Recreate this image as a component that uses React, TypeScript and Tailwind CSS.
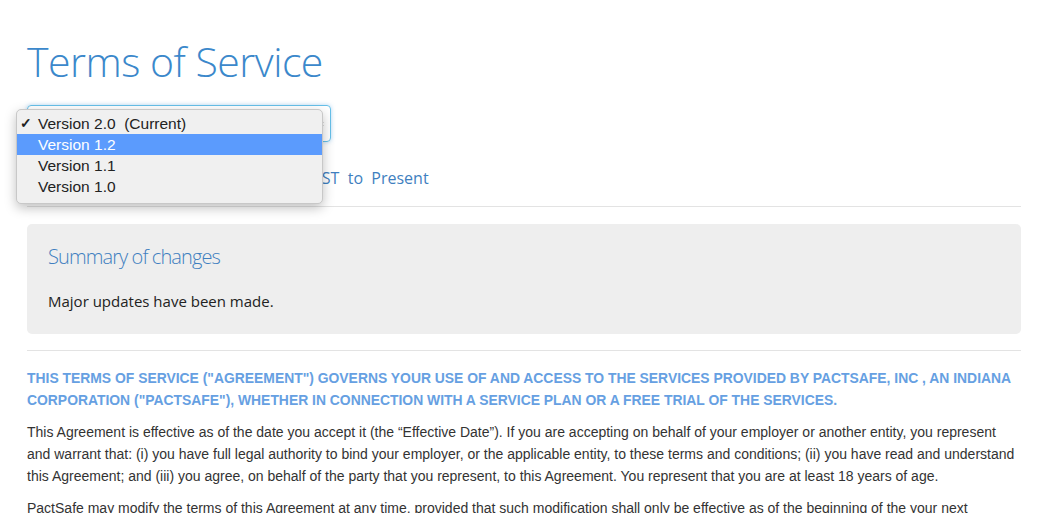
const VERSIONS = ["Version 2.0  (Current)", "Version 1.2", "Version 1.1", "Version 1.0"];

function VersionMenu() {
  return (
    <div className="absolute left-[-11px] top-[4px] w-[307px] rounded-[5px] border border-[#c8c8c8] bg-[#f0f0f0] pt-[3px] pb-[6px] shadow-[0_4px_12px_rgba(0,0,0,0.25)] font-['Liberation_Sans',sans-serif] text-[15.5px] text-[#222]">
      {VERSIONS.map((v, i) => (
        <div
          key={v}
          className={
            "flex h-[21px] items-center whitespace-pre " +
            (i === 1 ? "bg-[#5b9bfd] text-white" : "")
          }
        >
          <span className="w-[21px] pl-[3px] text-[14px] font-bold">{i === 0 ? "✓" : ""}</span>
          {v}
        </div>
      ))}
    </div>
  );
}

export default function App() {
  return (
    <div className="min-h-[513px] bg-white pl-[27px] pr-[24px] pt-[35px] font-['Open_Sans',sans-serif]">
      <h1 className="text-[41px] font-light leading-[53px] tracking-[-0.5px] text-[#3b88cb]">
        Terms of Service
      </h1>

      <div className="relative mt-[17px] w-[304px]">
        <div className="flex h-[37px] items-center justify-end rounded-[4px] border border-[#66c0e9] pr-[6px] shadow-[0_0_4px_rgba(102,175,233,0.5)]">
          <svg width="8" height="14" viewBox="0 0 8 14">
            <path d="M4 1 L7.5 5.5 H0.5 Z M4 13 L7.5 8.5 H0.5 Z" fill="#222" />
          </svg>
        </div>
        <VersionMenu />
      </div>

      <p className="mt-[25px] text-[16px] leading-[22px] text-[#3f7fc0] whitespace-pre">
        Effective  January  12, 2018  12:00 AM  PST  to  Present
      </p>

      <hr className="mt-[17px] border-t border-[#e3e3e3]" />

      <div className="mt-[17px] rounded-[5px] bg-[#eeeeee] px-[21px] pt-[18px] pb-[22px]">
        <h2 className="text-[20px] font-light leading-[30px] tracking-[-0.9px] text-[#3f7fc0]">
          Summary of changes
        </h2>
        <p className="mt-[18px] text-[15px] leading-[22px] text-[#222]">
          Major updates have been made.
        </p>
      </div>

      <hr className="mt-[16px] border-t border-[#e3e3e3]" />

      <div className="pt-[16px] font-['Liberation_Sans',sans-serif] text-[14px] leading-[22px] text-[#333]">
        <p className="text-[13.9px] font-bold text-[#66a0e2]">
          THIS TERMS OF SERVICE ("AGREEMENT") GOVERNS YOUR USE OF AND ACCESS TO THE SERVICES PROVIDED BY PACTSAFE, INC , AN INDIANA CORPORATION ("PACTSAFE"), WHETHER IN CONNECTION WITH A SERVICE PLAN OR A FREE TRIAL OF THE SERVICES.
        </p>
        <p className="mt-[10px]">
          This Agreement is effective as of the date you accept it (the “Effective Date”). If you are accepting on behalf of your employer or another entity, you represent and warrant that: (i) you have full legal authority to bind your employer, or the applicable entity, to these terms and conditions; (ii) you have read and understand this Agreement; and (iii) you agree, on behalf of the party that you represent, to this Agreement. You represent that you are at least 18 years of age.
        </p>
        <p className="mt-[10px]">
          PactSafe may modify the terms of this Agreement at any time, provided that such modification shall only be effective as of the beginning of the your next subscription term.
        </p>
      </div>
    </div>
  );
}
